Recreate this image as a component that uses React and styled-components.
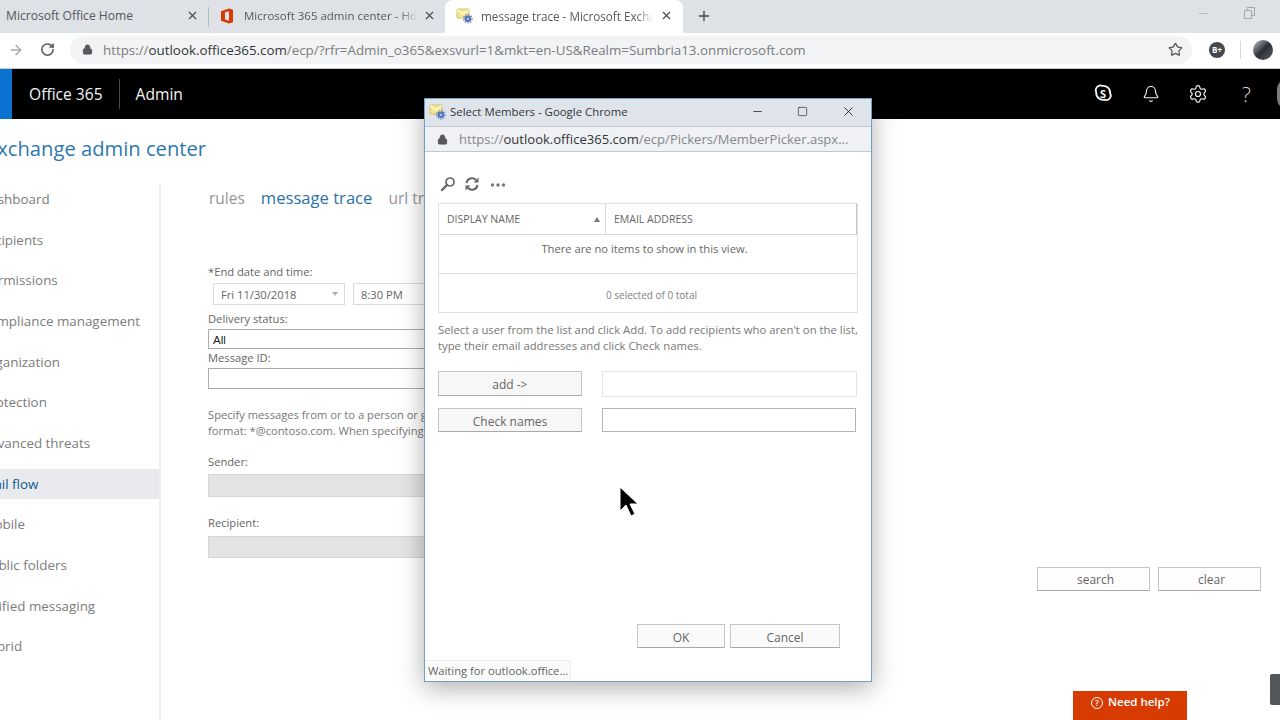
import React from "react";
import styled, { createGlobalStyle } from "styled-components";
import { ArrowRight, Bell, Lock, Minus, Plus, RotateCw, Settings, Square, Star, X } from "lucide-react";

const GlobalStyle = createGlobalStyle`
  html, body {
    margin: 0;
    padding: 0;
    background: #fff;
  }
  * {
    box-sizing: border-box;
  }
`;

const Page = styled.div`
  position: relative;
  display: flex;
  flex-direction: column;
  width: 1280px;
  height: 720px;
  overflow: hidden;
  background: #fff;
  color: #666;
  font-family: "Open Sans", "Noto Sans", sans-serif;
`;

/* browser chrome */
const TabStrip = styled.div`
  display: flex;
  align-items: center;
  height: 33px;
  background: #dee1e6;
  flex-shrink: 0;
`;

const Tab = styled.div`
  display: flex;
  align-items: center;
  width: ${(p) => p.$width}px;
  height: 33px;
  padding: 0 ${(p) => p.$right}px 2px ${(p) => p.$left}px;
  background: ${(p) => (p.$active ? "#fff" : "transparent")};
  border-radius: ${(p) => (p.$active ? "8px 8px 0 0" : "0")};
  color: #55585c;
`;

const TabDivider = styled.span`
  width: 1px;
  height: 20px;
  background: #b9bcc1;
`;

const TabTitle = styled.span`
  flex: 1;
  margin-left: ${(p) => p.$gap || 0}px;
  overflow: hidden;
  white-space: nowrap;
  font-size: ${(p) => p.$size}px;
  mask-image: ${(p) => (p.$fade ? "linear-gradient(to right, #000 88%, transparent 98%)" : "none")};
`;

const TabClose = styled(X)`
  flex-shrink: 0;
  margin-left: 2px;
  color: #45484c;
`;

const NewTab = styled(Plus)`
  margin-left: 13px;
  margin-bottom: 2px;
  color: #44474b;
`;

const WindowControls = styled.div`
  display: flex;
  align-items: center;
  gap: 33px;
  margin-left: auto;
  margin-right: 25px;
  margin-bottom: 7px;
  color: #a3a5a9;
`;

const AddressRow = styled.div`
  display: flex;
  align-items: center;
  height: 36px;
  padding: 0 0 2px 8px;
  background: #fff;
  border-bottom: 1px solid #c9cbce;
  flex-shrink: 0;
`;

const NavIcon = styled.span`
  display: flex;
  justify-content: center;
  width: ${(p) => p.$width}px;
  color: ${(p) => p.$color};
`;

const AddressPill = styled.div`
  display: flex;
  align-items: center;
  justify-content: space-between;
  width: 1122px;
  height: 28px;
  padding: 0 9px 0 12px;
  border-radius: 14px;
  background: #f1f3f4;
`;

const AddressMain = styled.div`
  display: flex;
  align-items: center;
`;

const AddressText = styled.span`
  margin-left: 10px;
  color: #7a7d81;
  font-size: 13.35px;
  white-space: nowrap;
`;

const Host = styled.span`
  color: #33363a;
`;

const ExtensionBadge = styled.span`
  display: flex;
  align-items: center;
  justify-content: center;
  width: 16px;
  height: 16px;
  margin-left: 17px;
  border-radius: 50%;
  background: #45484c;
  color: #fff;
  font-size: 8px;
  font-weight: 700;
`;

const ToolbarRule = styled.span`
  width: 1px;
  height: 18px;
  margin-left: 15px;
  background: #d6d8da;
`;

const Avatar = styled.span`
  width: 20px;
  height: 20px;
  margin-left: 12px;
  border-radius: 50%;
  background: linear-gradient(135deg, #a9b2bc 8%, #2c2f34 50%, #5a5f66);
`;

/* office 365 bar */
const TopBar = styled.div`
  display: flex;
  align-items: center;
  height: 50px;
  background: #000;
  color: #f4f4f4;
  flex-shrink: 0;
`;

const AppTile = styled.div`
  width: 12px;
  height: 50px;
  background: #0a72d0;
`;

const Brand = styled.div`
  margin-left: 17px;
  padding-right: 16px;
  border-right: 1px solid #4a4a4a;
  font-size: 15.6px;
  line-height: 30px;
`;

const AppName = styled.div`
  margin-left: 16px;
  font-size: 15.6px;
`;

const TopIcons = styled.div`
  display: flex;
  align-items: center;
  gap: 28.5px;
  margin-left: auto;
  margin-right: -17px;
`;

const HelpMark = styled.span`
  width: 20px;
  text-align: center;
  font-size: 21px;
  font-weight: 300;
  color: #d8d8d8;
`;

const UserBlob = styled.span`
  width: 20px;
  height: 30px;
  margin-left: -8px;
  border-radius: 10px;
  background: #7c7c7c;
`;

/* exchange admin page */
const AdminHeader = styled.div`
  height: 65px;
  padding-top: 14px;
  margin-left: -14px;
  color: #2f78ad;
  font-size: 20.2px;
  line-height: 30px;
  white-space: nowrap;
  flex-shrink: 0;
`;

const AdminBody = styled.div`
  display: flex;
  flex: 1;
  min-height: 0;
`;

const Sidebar = styled.div`
  width: 161px;
  border-right: 2px solid #eeeeee;
  overflow: hidden;
  flex-shrink: 0;
`;

const SideItem = styled.div`
  height: 30px;
  margin-bottom: 10.67px;
  background: ${(p) => (p.$active ? "#e8eaed" : "transparent")};
  color: ${(p) => (p.$active ? "#0e5a8f" : "#7c7c7c")};
  font-size: 13.4px;
  line-height: 30px;
  text-indent: -18px;
  white-space: nowrap;
`;

const Content = styled.div`
  flex: 1;
  display: flex;
  flex-direction: column;
  padding-left: 47px;
  min-width: 0;
`;

const TabLinks = styled.div`
  display: flex;
  gap: 16px;
  height: 28px;
  padding-left: 1px;
  line-height: 28px;
  white-space: nowrap;
`;

const TabLink = styled.span`
  color: ${(p) => (p.$active ? "#2a72a6" : "#959595")};
  font-size: ${(p) => (p.$active ? 16.6 : 15.5)}px;
`;

const Label = styled.div`
  margin-top: ${(p) => p.$top}px;
  height: 16px;
  line-height: 16px;
  font-size: 11.2px;
  color: #666;
`;

const DateRow = styled.div`
  display: flex;
  gap: 8px;
  margin: 3px 0 0 5px;
`;

const DateBox = styled.div`
  display: flex;
  align-items: center;
  justify-content: space-between;
  width: ${(p) => p.$width}px;
  height: 22px;
  padding: 0 6px 0 7px;
  border: 1px solid #dcdcdc;
  color: #666;
  font-size: 11.2px;
`;

const Caret = styled.span`
  width: 0;
  height: 0;
  border-left: 3.5px solid transparent;
  border-right: 3.5px solid transparent;
  border-top: 4px solid #b0b0b0;
`;

const Field = styled.div`
  width: 600px;
  height: ${(p) => p.$height}px;
  margin-top: ${(p) => p.$top}px;
  padding-left: 4px;
  background: ${(p) => (p.$disabled ? "#e4e4e4" : "#fff")};
  border: 1px solid ${(p) => (p.$disabled ? "#d6d6d6" : "#ababab")};
  color: #222;
  font-family: "Liberation Sans", sans-serif;
  font-size: 11.5px;
  line-height: 20px;
`;

const Note = styled.div`
  margin-top: 18px;
  font-size: 11.2px;
  line-height: 15.5px;
  color: #777;
  white-space: nowrap;
`;

const Actions = styled.div`
  display: flex;
  justify-content: flex-end;
  gap: 8px;
  margin-top: 9px;
  padding-right: 19px;
`;

const GreyButton = styled.button`
  width: ${(p) => p.$width}px;
  height: ${(p) => p.$height || 24}px;
  padding: 0 0 0 ${(p) => p.$shift || 0}px;
  background: ${(p) => p.$bg || "#fdfdfd"};
  border: 1px solid #c6c6c6;
  border-bottom-color: #a8a8a8;
  color: #666;
  font-family: inherit;
  font-size: 12px;
`;

const PopupButton = styled(GreyButton)`
  padding-top: 2px;
`;

const HelpTab = styled.div`
  position: absolute;
  left: 1073px;
  bottom: 0;
  display: flex;
  align-items: flex-start;
  justify-content: center;
  gap: 4px;
  width: 114px;
  height: 29px;
  padding-top: 3px;
  background: #d83b01;
  color: #fff;
  font-size: 11.5px;
  font-weight: 600;
`;

const EdgeTab = styled.div`
  position: absolute;
  right: 0;
  top: 674px;
  width: 10px;
  height: 31px;
  background: #55585a;
  border-radius: 2px 0 0 2px;
`;

/* popup window */
const Popup = styled.div`
  position: absolute;
  left: 424px;
  top: 98px;
  width: 448px;
  height: 584px;
  display: flex;
  flex-direction: column;
  background: #fff;
  border: 1px solid #6fa0c6;
  box-shadow: 0 6px 24px rgba(0, 0, 0, 0.32);
`;

const PopupTitle = styled.div`
  display: flex;
  align-items: center;
  height: 27px;
  padding: 0 15px 2px 4px;
  background: #dfe4ea;
  color: #33363a;
  font-size: 11.4px;
  flex-shrink: 0;
`;

const PopupTitleText = styled.span`
  margin-left: 4px;
`;

const PopupControls = styled.div`
  display: flex;
  align-items: center;
  gap: 33px;
  margin-left: auto;
  color: #1e1e1e;
`;

const PopupUrl = styled.div`
  display: flex;
  align-items: center;
  height: 26px;
  padding: 0 0 0 12px;
  background: #eff1f4;
  border-top: 1px solid #c2c7cd;
  border-bottom: 1px solid #c2c7cd;
  color: #85888c;
  font-size: 13.05px;
  white-space: nowrap;
  flex-shrink: 0;
`;

const PopupUrlText = styled.span`
  margin-left: 11px;
`;

const PopupBody = styled.div`
  flex: 1;
  display: flex;
  flex-direction: column;
  padding: 22px 14px 33px 13px;
  min-height: 0;
`;

const IconRow = styled.div`
  display: flex;
  align-items: center;
  gap: 8px;
  height: 20px;
  padding-left: 2px;
  color: #666;
`;

const Table = styled.div`
  width: 420px;
  margin-top: 9px;
  border: 1px solid #e1e1e1;
`;

const TableHead = styled.div`
  display: grid;
  grid-template-columns: 167px 1fr;
  height: 31px;
  border-bottom: 1px solid #d8d8d8;
  border-right: 1px solid #c4c4c4;
  font-size: 10.5px;
  line-height: 30px;
  color: #666;
`;

const HeadCell = styled.div`
  display: flex;
  align-items: center;
  justify-content: space-between;
  padding: 0 5px 0 8px;
  border-right: ${(p) => (p.$divider ? "1px solid #dcdcdc" : "0")};
`;

const SortArrow = styled.span`
  width: 0;
  height: 0;
  border-left: 3.5px solid transparent;
  border-right: 3.5px solid transparent;
  border-bottom: 5px solid #777;
`;

const TableRow = styled.div`
  height: ${(p) => p.$height}px;
  padding: ${(p) => p.$pad}px ${(p) => p.$right}px 0 ${(p) => p.$left}px;
  border-bottom: ${(p) => (p.$divider ? "1px solid #dcdcdc" : "0")};
  text-align: center;
  color: ${(p) => p.$color};
  font-size: ${(p) => p.$size}px;
  line-height: 16px;
`;

const Instructions = styled.div`
  margin-top: 9px;
  font-size: 11.32px;
  line-height: 16px;
  color: #777;
  white-space: nowrap;
`;

const PickRow = styled.div`
  display: flex;
  gap: 20px;
  margin-top: ${(p) => p.$top}px;
`;

const PickInput = styled.div`
  width: ${(p) => p.$width}px;
  height: ${(p) => p.$height}px;
  border: 1px solid ${(p) => p.$line};
`;

const DialogButtons = styled.div`
  display: flex;
  justify-content: flex-end;
  gap: 5px;
  margin-top: auto;
  padding-right: 17px;
`;

const StatusBubble = styled.div`
  position: absolute;
  left: 0;
  bottom: 0;
  width: 146px;
  height: 21px;
  padding-left: 3px;
  background: #fafafa;
  border-top: 1px solid #ededed;
  border-right: 1px solid #ededed;
  color: #666;
  font-size: 11.2px;
  line-height: 20px;
  white-space: nowrap;
`;

const Pointer = styled.svg`
  position: absolute;
  left: 618px;
  top: 486px;
`;

const MailFavicon = () => (
  <svg width="17" height="17" viewBox="0 0 17 17">
    <path d="M1 2h12v9H1z" fill="#f5e68f" stroke="#c4b264" strokeWidth=".8" />
    <path d="M1 2.5l6 4.5 6-4.5" fill="none" stroke="#fffbe0" strokeWidth="1.2" />
    <circle cx="11.8" cy="11.8" r="3.3" fill="#5272b8" />
    <circle cx="11.8" cy="11.8" r="4.2" fill="none" stroke="#5272b8" strokeWidth="1.2" strokeDasharray="1.4 1.4" />
    <circle cx="11.8" cy="11.8" r="1.1" fill="#cfdaf0" />
  </svg>
);

const OfficeLogo = () => (
  <svg width="14" height="16" viewBox="0 0 14 16">
    <path
      fillRule="evenodd"
      d="M1 3.3L9 .6l4 1.1v12.6l-4 1.1-8-2.700zM9 3.3L5 4.3v7.2l4 1.2z"
      fill="#d83b01"
    />
  </svg>
);

const SkypeIcon = () => (
  <svg width="20" height="20" viewBox="0 0 20 20">
    <path
      d="M5.8 1.8c1.2-.5 2.5-.4 3.5.1 4.3-.7 8.3 3 7.8 7.4 1 1.6.8 3.8-.5 5.2-1.3 1.5-3.4 1.9-5.1 1.2-4.6.9-8.8-2.9-8.3-7.5-1.2-2.4 0-5.4 2.6-6.4z"
      fill="none"
      stroke="#f4f4f4"
      strokeWidth="1.8"
    />
    <text x="10" y="13.5" textAnchor="middle" fontSize="11" fontWeight="700" fill="#f4f4f4" fontFamily="Open Sans, sans-serif">
      S
    </text>
  </svg>
);

const PickerSearch = () => (
  <svg width="16" height="16" viewBox="0 0 16 16" fill="none" stroke="currentColor">
    <circle cx="10" cy="6" r="4" strokeWidth="1.7" />
    <path d="M7 9l-5 5" strokeWidth="2.4" strokeLinecap="round" />
  </svg>
);

const PickerRefresh = () => (
  <svg width="16" height="16" viewBox="0 0 16 16" fill="none" stroke="currentColor" strokeWidth="2">
    <path d="M2.5 7a5.5 5.5 0 0 1 9.5-3" />
    <path d="M13.5 9a5.5 5.5 0 0 1-9.5 3" />
    <path d="M14.5 1.5v5h-5z" fill="currentColor" stroke="none" />
    <path d="M1.5 14.5v-5h5z" fill="currentColor" stroke="none" />
  </svg>
);

const PickerMore = () => (
  <svg width="16" height="16" viewBox="0 0 16 16" fill="#777" style={{ marginLeft: 2 }}>
    <circle cx="2.5" cy="9" r="1.7" />
    <circle cx="8" cy="9" r="1.7" />
    <circle cx="13.5" cy="9" r="1.7" />
  </svg>
);

const RestoreIcon = () => (
  <svg width="11" height="12" viewBox="0 0 11 12" fill="none" stroke="currentColor" strokeWidth="1">
    <path d="M.5 3.5h7v8h-7z" />
    <path d="M3 3.5V.5h7.5v8H7.5" />
  </svg>
);

const sideItems = [
  "dashboard",
  "recipients",
  "permissions",
  "compliance management",
  "organization",
  "protection",
  "advanced threats",
  "mail flow",
  "mobile",
  "public folders",
  "unified messaging",
  "hybrid",
];

const App = () => (
  <Page>
    <GlobalStyle />
    <TabStrip>
      <Tab $width={208} $left={6} $right={9}>
        <TabTitle $size={12.1}>Microsoft Office Home</TabTitle>
        <TabClose size={13} />
      </Tab>
      <TabDivider />
      <Tab $width={236} $left={11} $right={9}>
        <OfficeLogo />
        <TabTitle $gap={10} $size={11.5} $fade>Microsoft 365 admin center - Ho</TabTitle>
        <TabClose size={13} />
      </Tab>
      <Tab $width={238} $left={11} $right={10} $active>
        <MailFavicon />
        <TabTitle $gap={8} $size={11.7} $fade>message trace - Microsoft Exchan</TabTitle>
        <TabClose size={13} />
      </Tab>
      <NewTab size={16} />
      <WindowControls>
        <Minus size={15} strokeWidth={1} />
        <RestoreIcon />
      </WindowControls>
    </TabStrip>
    <AddressRow>
      <NavIcon $width={16} $color="#a4a6a9">
        <ArrowRight size={16} />
      </NavIcon>
      <NavIcon $width={46} $color="#55585c">
        <RotateCw size={15} strokeWidth={2.4} />
      </NavIcon>
      <AddressPill>
        <AddressMain>
          <Lock size={11} fill="#55585c" color="#55585c" />
          <AddressText>
            https://<Host>outlook.office365.com</Host>/ecp/?rfr=Admin_o365&amp;exsvurl=1&amp;mkt=en-US&amp;Realm=Sumbria13.onmicrosoft.com
          </AddressText>
        </AddressMain>
        <Star size={15} color="#55585c" />
      </AddressPill>
      <ExtensionBadge>B+</ExtensionBadge>
      <ToolbarRule />
      <Avatar />
    </AddressRow>
    <TopBar>
      <AppTile />
      <Brand>Office 365</Brand>
      <AppName>Admin</AppName>
      <TopIcons>
        <SkypeIcon />
        <Bell size={18} strokeWidth={1.5} />
        <Settings size={20} strokeWidth={1.4} />
        <HelpMark>?</HelpMark>
        <UserBlob />
      </TopIcons>
    </TopBar>
    <AdminHeader>Exchange admin center</AdminHeader>
    <AdminBody>
      <Sidebar>
        {sideItems.map((item) => (
          <SideItem key={item} $active={item === "mail flow"}>
            {item}
          </SideItem>
        ))}
      </Sidebar>
      <Content>
        <TabLinks>
          <TabLink>rules</TabLink>
          <TabLink $active>message trace</TabLink>
          <TabLink>url trace</TabLink>
        </TabLinks>
        <Label $top={52}>*End date and time:</Label>
        <DateRow>
          <DateBox $width={132}>
            Fri 11/30/2018
            <Caret />
          </DateBox>
          <DateBox $width={120}>8:30 PM</DateBox>
        </DateRow>
        <Label $top={6}>Delivery status:</Label>
        <Field $top={2} $height={20}>All</Field>
        <Label $top={1}>Message ID:</Label>
        <Field $top={2} $height={21} />
        <Note>
          Specify messages from or to a person or group.
          <br />
          format: *@contoso.com. When specifying a wildcard, other addresses can't be added.
        </Note>
        <Label $top={16}>Sender:</Label>
        <Field $top={4} $height={23} $disabled />
        <Label $top={18}>Recipient:</Label>
        <Field $top={5} $height={22} $disabled />
        <Actions>
          <GreyButton $width={113} $shift={4}>search</GreyButton>
          <GreyButton $width={103} $shift={4}>clear</GreyButton>
        </Actions>
      </Content>
    </AdminBody>
    <HelpTab>
      <svg width="14" height="14" viewBox="0 0 14 14" style={{ marginTop: 2 }}>
        <circle cx="7" cy="7" r="5.5" fill="none" stroke="#fff" strokeWidth="1" />
        <text x="7" y="10" textAnchor="middle" fontSize="8.5" fill="#fff">?</text>
      </svg>
      Need help?
    </HelpTab>
    <EdgeTab />
    <Popup>
      <PopupTitle>
        <MailFavicon />
        <PopupTitleText>Select Members - Google Chrome</PopupTitleText>
        <PopupControls>
          <Minus size={13} strokeWidth={1.4} />
          <Square size={11} strokeWidth={1.4} />
          <X size={15} strokeWidth={1.4} />
        </PopupControls>
      </PopupTitle>
      <PopupUrl>
        <Lock size={11} fill="#55585c" color="#55585c" />
        <PopupUrlText>
          https://<Host>outlook.office365.com</Host>/ecp/Pickers/MemberPicker.aspx...
        </PopupUrlText>
      </PopupUrl>
      <PopupBody>
        <IconRow>
          <PickerSearch />
          <PickerRefresh />
          <PickerMore />
        </IconRow>
        <Table>
          <TableHead>
            <HeadCell $divider>
              DISPLAY NAME
              <SortArrow />
            </HeadCell>
            <HeadCell>EMAIL ADDRESS</HeadCell>
          </TableHead>
          <TableRow $height={39} $pad={6} $right={7} $left={0} $divider $color="#666" $size={11.2}>
            There are no items to show in this view.
          </TableRow>
          <TableRow $height={38} $pad={13} $right={0} $left={7} $color="#808080" $size={10}>
            0 selected of 0 total
          </TableRow>
        </Table>
        <Instructions>
          Select a user from the list and click Add. To add recipients who aren't on the list,
          <br />
          type their email addresses and click Check names.
        </Instructions>
        <PickRow $top={17}>
          <PopupButton $width={144} $height={25} $bg="#f7f7f7">add -&gt;</PopupButton>
          <PickInput $width={256} $height={26} $line="#e3e3e3" />
        </PickRow>
        <PickRow $top={11}>
          <PopupButton $width={144} $height={24} $bg="#f7f7f7">Check names</PopupButton>
          <PickInput $width={254} $height={24} $line="#b4b4b4" />
        </PickRow>
        <DialogButtons>
          <PopupButton $width={88} $bg="#fafafa">OK</PopupButton>
          <PopupButton $width={110} $bg="#fafafa">Cancel</PopupButton>
        </DialogButtons>
      </PopupBody>
      <StatusBubble>Waiting for outlook.office...</StatusBubble>
    </Popup>
    <Pointer width="20" height="32" viewBox="0 0 20 32">
      <path d="M2 1v24l6-6 5 11 4-2-5-10h8z" fill="#000" stroke="#fff" strokeWidth="1" />
    </Pointer>
  </Page>
);

export default App;
